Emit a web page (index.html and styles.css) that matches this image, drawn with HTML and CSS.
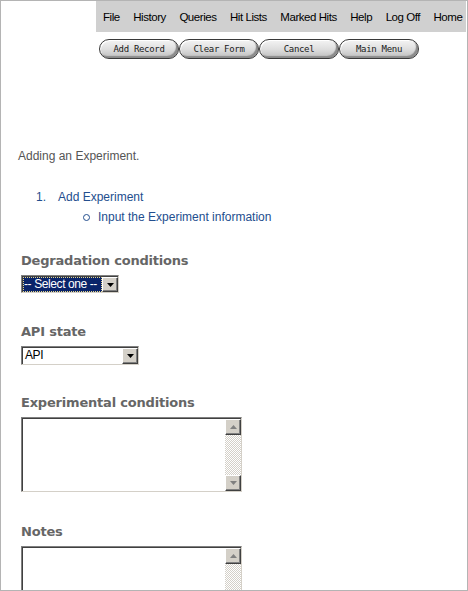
FILE: index.html
```html
<!DOCTYPE html>
<html>
<head>
<meta charset="utf-8">
<link rel="stylesheet" href="styles.css">
</head>
<body>
<div class="frame">
  <nav class="topnav">
    <a>File</a><a>History</a><a>Queries</a><a>Hit Lists</a><a>Marked Hits</a><a>Help</a><a>Log Off</a><a>Home</a>
  </nav>
  <div class="toolbar">
    <button class="pill">Add Record</button>
    <button class="pill">Clear Form</button>
    <button class="pill">Cancel</button>
    <button class="pill">Main Menu</button>
  </div>
  <main class="content">
    <p class="intro">Adding an Experiment.</p>
    <div class="steps">
      <div class="step"><span class="num">1.</span><span>Add Experiment</span></div>
      <div class="substep"><span class="circle"></span><span>Input the Experiment information</span></div>
    </div>
    <div class="fields">
      <div class="field">
        <label class="flabel">Degradation conditions</label>
        <div class="combo combo-deg">
          <span class="combo-value focused">-- Select one --</span>
          <span class="combo-btn"><svg width="7" height="4" viewBox="0 0 7 4"><path d="M0 0h7L3.5 4z" fill="#000"/></svg></span>
        </div>
      </div>
      <div class="field">
        <label class="flabel">API state</label>
        <div class="combo combo-api">
          <span class="combo-value">API</span>
          <span class="combo-btn"><svg width="7" height="4" viewBox="0 0 7 4"><path d="M0 0h7L3.5 4z" fill="#000"/></svg></span>
        </div>
      </div>
      <div class="field field-exp">
        <label class="flabel">Experimental conditions</label>
        <div class="tbox">
          <textarea></textarea>
          <div class="sbar">
            <span class="sbtn"><svg width="7" height="4" viewBox="0 0 7 4"><path d="M0 4h7L3.5 0z" fill="#808080"/></svg></span>
            <span class="strack"></span>
            <span class="sbtn"><svg width="7" height="4" viewBox="0 0 7 4"><path d="M0 0h7L3.5 4z" fill="#808080"/></svg></span>
          </div>
        </div>
      </div>
      <div class="field">
        <label class="flabel">Notes</label>
        <div class="tbox">
          <textarea></textarea>
          <div class="sbar">
            <span class="sbtn"><svg width="7" height="4" viewBox="0 0 7 4"><path d="M0 4h7L3.5 0z" fill="#808080"/></svg></span>
            <span class="strack"></span>
            <span class="sbtn"><svg width="7" height="4" viewBox="0 0 7 4"><path d="M0 0h7L3.5 4z" fill="#808080"/></svg></span>
          </div>
        </div>
      </div>
    </div>
  </main>
</div>
</body>
</html>
```

FILE: styles.css
```css
html, body {
  margin: 0;
  padding: 0;
  background: #fff;
}

.frame {
  width: 468px;
  height: 591px;
  box-sizing: border-box;
  border: 1px solid #b4b4b4;
  overflow: hidden;
  background: #fff;
  font-family: "Liberation Sans", Arial, sans-serif;
}

.topnav {
  margin-left: 95px;
  margin-right: 1px;
  height: 31px;
  background: #d0d0d0;
  display: flex;
  align-items: center;
  padding-left: 7px;
  gap: 13.5px;
  font-size: 11.5px;
  letter-spacing: -0.45px;
  color: #000;
}

.topnav a {
  white-space: nowrap;
}

.toolbar {
  margin-left: 98px;
  margin-top: 7px;
  display: flex;
}

.pill {
  width: 80px;
  height: 20px;
  box-sizing: border-box;
  border: 1px solid #3a3a3a;
  border-radius: 10px;
  background: linear-gradient(#f4f4f4, #dcdcdc 55%, #bdbdbd);
  box-shadow: inset -2px -2px 1px #8c8c8c, inset 1px 1px 0 #ffffff;
  font-family: "DejaVu Sans Mono", monospace;
  font-size: 9px;
  font-weight: normal;
  letter-spacing: -0.3px;
  color: #1a1a1a;
  padding: 0;
}

.content {
  padding-left: 17px;
}

.intro {
  margin: 90px 0 0;
  font-size: 12px;
  line-height: 14px;
  color: #555;
}

.steps {
  margin-top: 24px;
  color: #234e8e;
  font-size: 12px;
  line-height: 20px;
}

.step {
  display: flex;
  padding-left: 18px;
}

.num {
  width: 22px;
}

.substep {
  display: flex;
  align-items: center;
  padding-left: 65px;
  gap: 8px;
}

.circle {
  width: 7px;
  height: 7px;
  box-sizing: border-box;
  border: 1px solid #234e8e;
  border-radius: 50%;
}

.fields {
  margin-top: 26px;
  padding-left: 3px;
}

.field {
  margin-bottom: 31px;
}

.field-exp {
  margin-top: -1px;
  margin-bottom: 32px;
}

.flabel {
  display: block;
  font-family: "DejaVu Sans", Verdana, sans-serif;
  font-weight: bold;
  font-size: 13px;
  letter-spacing: -0.2px;
  line-height: 16px;
  color: #666;
  margin-bottom: 6px;
}

.combo {
  display: flex;
  box-sizing: border-box;
  height: 18px;
  border: 1px solid;
  border-color: #808080 #d4d0c8 #d4d0c8 #808080;
  box-shadow: inset 1px 1px 0 #404040;
  padding: 1px 0 0 1px;
  background: #fff;
}

.combo-deg {
  width: 98px;
}

.combo-api {
  width: 118px;
  height: 19px;
}

.combo-value {
  flex: 1;
  font-size: 12px;
  letter-spacing: -0.4px;
  line-height: 14px;
  padding-left: 2px;
  color: #000;
  white-space: nowrap;
  overflow: hidden;
}

.combo-value.focused {
  background: #0a246a;
  color: #fff;
  outline: 1px dotted #e8d88a;
  outline-offset: -1px;
  padding-left: 1px;
}

.combo-btn {
  width: 16px;
  box-sizing: border-box;
  background: #d4d0c8;
  border: 1px solid;
  border-color: #fff #404040 #404040 #fff;
  box-shadow: inset -1px -1px 0 #808080;
  display: flex;
  align-items: center;
  justify-content: center;
}

.tbox {
  display: flex;
  box-sizing: border-box;
  width: 221px;
  height: 75px;
  border: 1px solid;
  border-color: #808080 #d4d0c8 #d4d0c8 #808080;
  box-shadow: inset 1px 1px 0 #404040;
  padding: 1px 0 0 1px;
  background: #fff;
}

.tbox textarea {
  flex: 1;
  border: 0;
  padding: 0;
  margin: 0;
  resize: none;
  outline: none;
  background: #fff;
}

.sbar {
  width: 16px;
  display: flex;
  flex-direction: column;
  background-color: #fff;
  background-image: conic-gradient(#d4d0c8 25%, #fff 0 50%, #d4d0c8 0 75%, #fff 0);
  background-size: 2px 2px;
}

.strack {
  flex: 1;
}

.sbtn {
  height: 16px;
  box-sizing: border-box;
  background: #d4d0c8;
  border: 1px solid;
  border-color: #fff #404040 #404040 #fff;
  box-shadow: inset -1px -1px 0 #808080;
  display: flex;
  align-items: center;
  justify-content: center;
}
```
